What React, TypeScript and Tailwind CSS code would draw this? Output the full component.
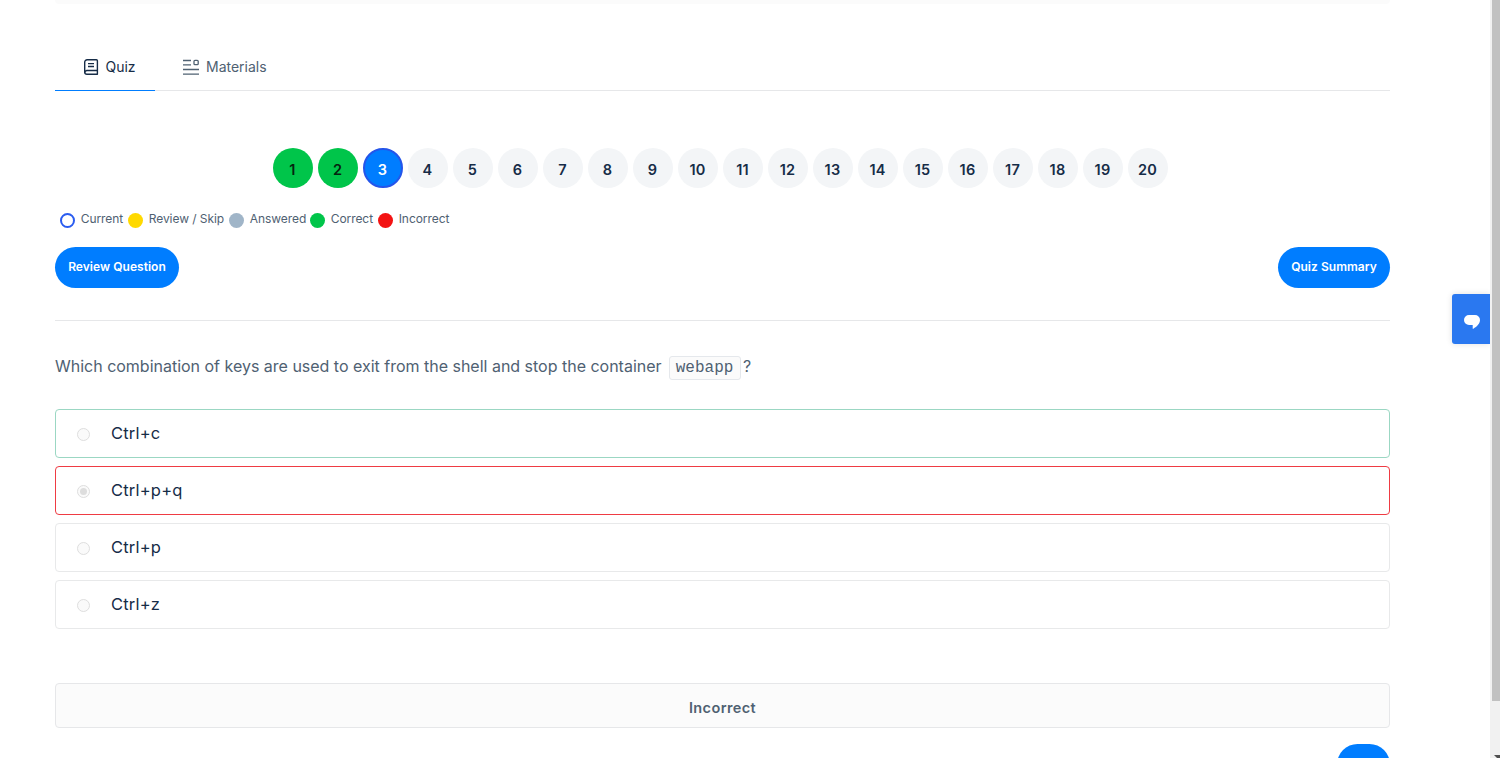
import React from "react";

const numbers = Array.from({ length: 20 }, (_, i) => i + 1);

function circleClass(n: number) {
  if (n < 3) return "bg-[#00c54a] text-[#05230f]";
  if (n === 3) return "border-2 border-[#2455ea] bg-[#007dff] text-white";
  return "bg-[#f3f5f7] text-[#162c47]";
}

const legend = [
  { label: "Current", dot: "border-2 border-[#2a5cf0] bg-white", width: "w-[68px]" },
  { label: "Review / Skip", dot: "bg-[#ffd900]", width: "w-[101px]" },
  { label: "Answered", dot: "bg-[#a0b5c8]", width: "w-[81px]" },
  { label: "Correct", dot: "bg-[#00c54a]", width: "w-[68px]" },
  { label: "Incorrect", dot: "bg-[#f31313]", width: "w-[80px]" },
];

const options = [
  { label: "Ctrl+c", border: "border-[#9bd7c3]", checked: false },
  { label: "Ctrl+p+q", border: "border-[#ef3b43]", checked: true },
  { label: "Ctrl+p", border: "border-[#e8e9ea]", checked: false },
  { label: "Ctrl+z", border: "border-[#e8e9ea]", checked: false },
];

function BookIcon() {
  return (
    <svg className="h-[18px] w-4 shrink-0" viewBox="0 0 16 18" fill="none" stroke="currentColor" strokeWidth="1.4">
      <path d="M4.2 1.7h9.2a1 1 0 0 1 1 1v13.6H3.9a2.2 2.2 0 0 1-2.2-2.1V4.2a2.5 2.5 0 0 1 2.5-2.5Z" strokeLinejoin="round" />
      <path d="M1.7 14.7a2.2 2.2 0 0 1 2.2-2.2h10.5M5 5.6h6M5 8.5h6" />
    </svg>
  );
}

function MaterialsIcon() {
  return (
    <svg className="h-[18px] w-4 shrink-0" viewBox="0 0 16 18" fill="none" stroke="currentColor" strokeWidth="1.3">
      <path d="M0 2.5h8M0 6.8h8M0 11.5h16M0 16.2h16" />
      <rect x="11" y="2.3" width="4.2" height="4.4" rx="1" />
    </svg>
  );
}

export default function App() {
  return (
    <div className="flex h-[758px] w-[1500px] overflow-hidden bg-white font-['Inter',sans-serif] text-[#4f6172]">
      <main className="ml-[55px] flex w-[1335px] shrink-0 flex-col">
        <div className="h-1 shrink-0 rounded-b bg-[#fbfbfb]" />

        <nav className="mt-10 flex h-[47px] shrink-0 border-b border-[#e6e7e9] text-sm">
          <div className="flex h-[47px] w-[100px] items-center border-b border-[#007dff] pl-7 text-[#162c47]">
            <BookIcon />
            <span className="ml-[6.5px]">Quiz</span>
          </div>
          <div className="flex h-[46px] items-center pl-7">
            <MaterialsIcon />
            <span className="ml-[7px]">Materials</span>
          </div>
        </nav>

        <div className="mt-[57px] flex h-10 shrink-0 gap-[5px] pl-[218px]">
          {numbers.map((n) => (
            <div
              key={n}
              className={`flex size-10 shrink-0 items-center justify-center rounded-full pr-px text-[14.5px] font-semibold tracking-[0.2px] ${circleClass(n)}`}
            >
              <span className="mt-[3px] leading-5">{n}</span>
            </div>
          ))}
        </div>

        <div className="mt-[22px] flex h-5 shrink-0 pl-[5px] text-xs">
          {legend.map((item) => (
            <div key={item.label} className={`flex shrink-0 whitespace-nowrap ${item.width}`}>
              <span className={`mt-[3px] size-[15px] shrink-0 rounded-full ${item.dot}`} />
              <span className="ml-[5.7px] leading-[18px] tracking-[-0.06px]">{item.label}</span>
            </div>
          ))}
        </div>

        <div className="mt-[17px] flex h-[41px] shrink-0 justify-between text-xs font-semibold text-white">
          <button className="h-[41px] w-[124px] rounded-full bg-[#007dff] pb-[2px] tracking-[0.04px]">Review Question</button>
          <button className="h-[41px] w-[112px] rounded-full bg-[#007dff] pb-[2px] tracking-[0.04px]">Quiz Summary</button>
        </div>

        <hr className="mt-8 shrink-0 border-[#e6e7e9]" />

        <p className="mt-[33px] flex h-[27px] shrink-0 whitespace-nowrap text-base leading-6 tracking-[-0.01px]">
          Which combination of keys are used to exit from the shell and stop the container
          <code className="ml-[7px] mt-[2px] flex h-6 w-[72px] items-center justify-center rounded-[3px] border border-[#e5e8ec] bg-[#fbfbfb] font-['Liberation_Mono',monospace] text-base tracking-normal">
            webapp
          </code>
          <span className="ml-[2.5px]">?</span>
        </p>

        <div className="mt-7 flex shrink-0 flex-col gap-2">
          {options.map((option) => (
            <div
              key={option.label}
              className={`flex h-[49px] items-center rounded-[4px] border pb-[2px] pl-[21px] text-[16.5px] text-[#162c47] ${option.border}`}
            >
              <span className="mt-[3px] flex size-[13px] items-center justify-center rounded-full border border-[#dedede] bg-[#fafafa]">
                {option.checked && <span className="size-[7px] rounded-full bg-[#dddddd]" />}
              </span>
              <span className="ml-[21px] leading-6 tracking-[0.2px]">{option.label}</span>
            </div>
          ))}
        </div>

        <div className="mt-[54px] flex h-[45px] shrink-0 items-center justify-center rounded-[4px] border border-[#e6e7e9] bg-[#fbfbfb] pt-[5px] text-[14.5px] font-semibold tracking-[0.4px]">
          Incorrect
        </div>
        <div className="mt-4 flex h-[41px] shrink-0 justify-end">
          <div className="h-[41px] w-[53px] rounded-full bg-[#007dff]" />
        </div>
      </main>

      <aside className="ml-auto mt-[294px] flex h-[50px] w-[38px] shrink-0 items-center justify-center rounded-l-[3px] bg-[#2a78f0] pl-[2px] pt-[5px] shadow-[0_0_6px_rgba(0,0,0,0.12)]">
        <svg className="h-[14px] w-4" viewBox="0 0 16 14" fill="white">
          <path d="M5 0h6a5 5 0 0 1 5 5c0 3.5-3 6.4-6.7 8.8-.3.2-.6 0-.6-.3V10H5A5 5 0 0 1 5 0Z" />
        </svg>
      </aside>

      <div className="z-10 flex h-[758px] w-[10px] shrink-0 flex-col bg-[#f1f1f1] pl-[2px]">
        <div className="h-[701px] bg-[#c1c1c1]" />
        <svg className="mt-[54px] h-[3px] w-2" viewBox="0 0 8 3" fill="#505050">
          <path d="M2 0h6v3H5Z" />
        </svg>
      </div>
    </div>
  );
}
